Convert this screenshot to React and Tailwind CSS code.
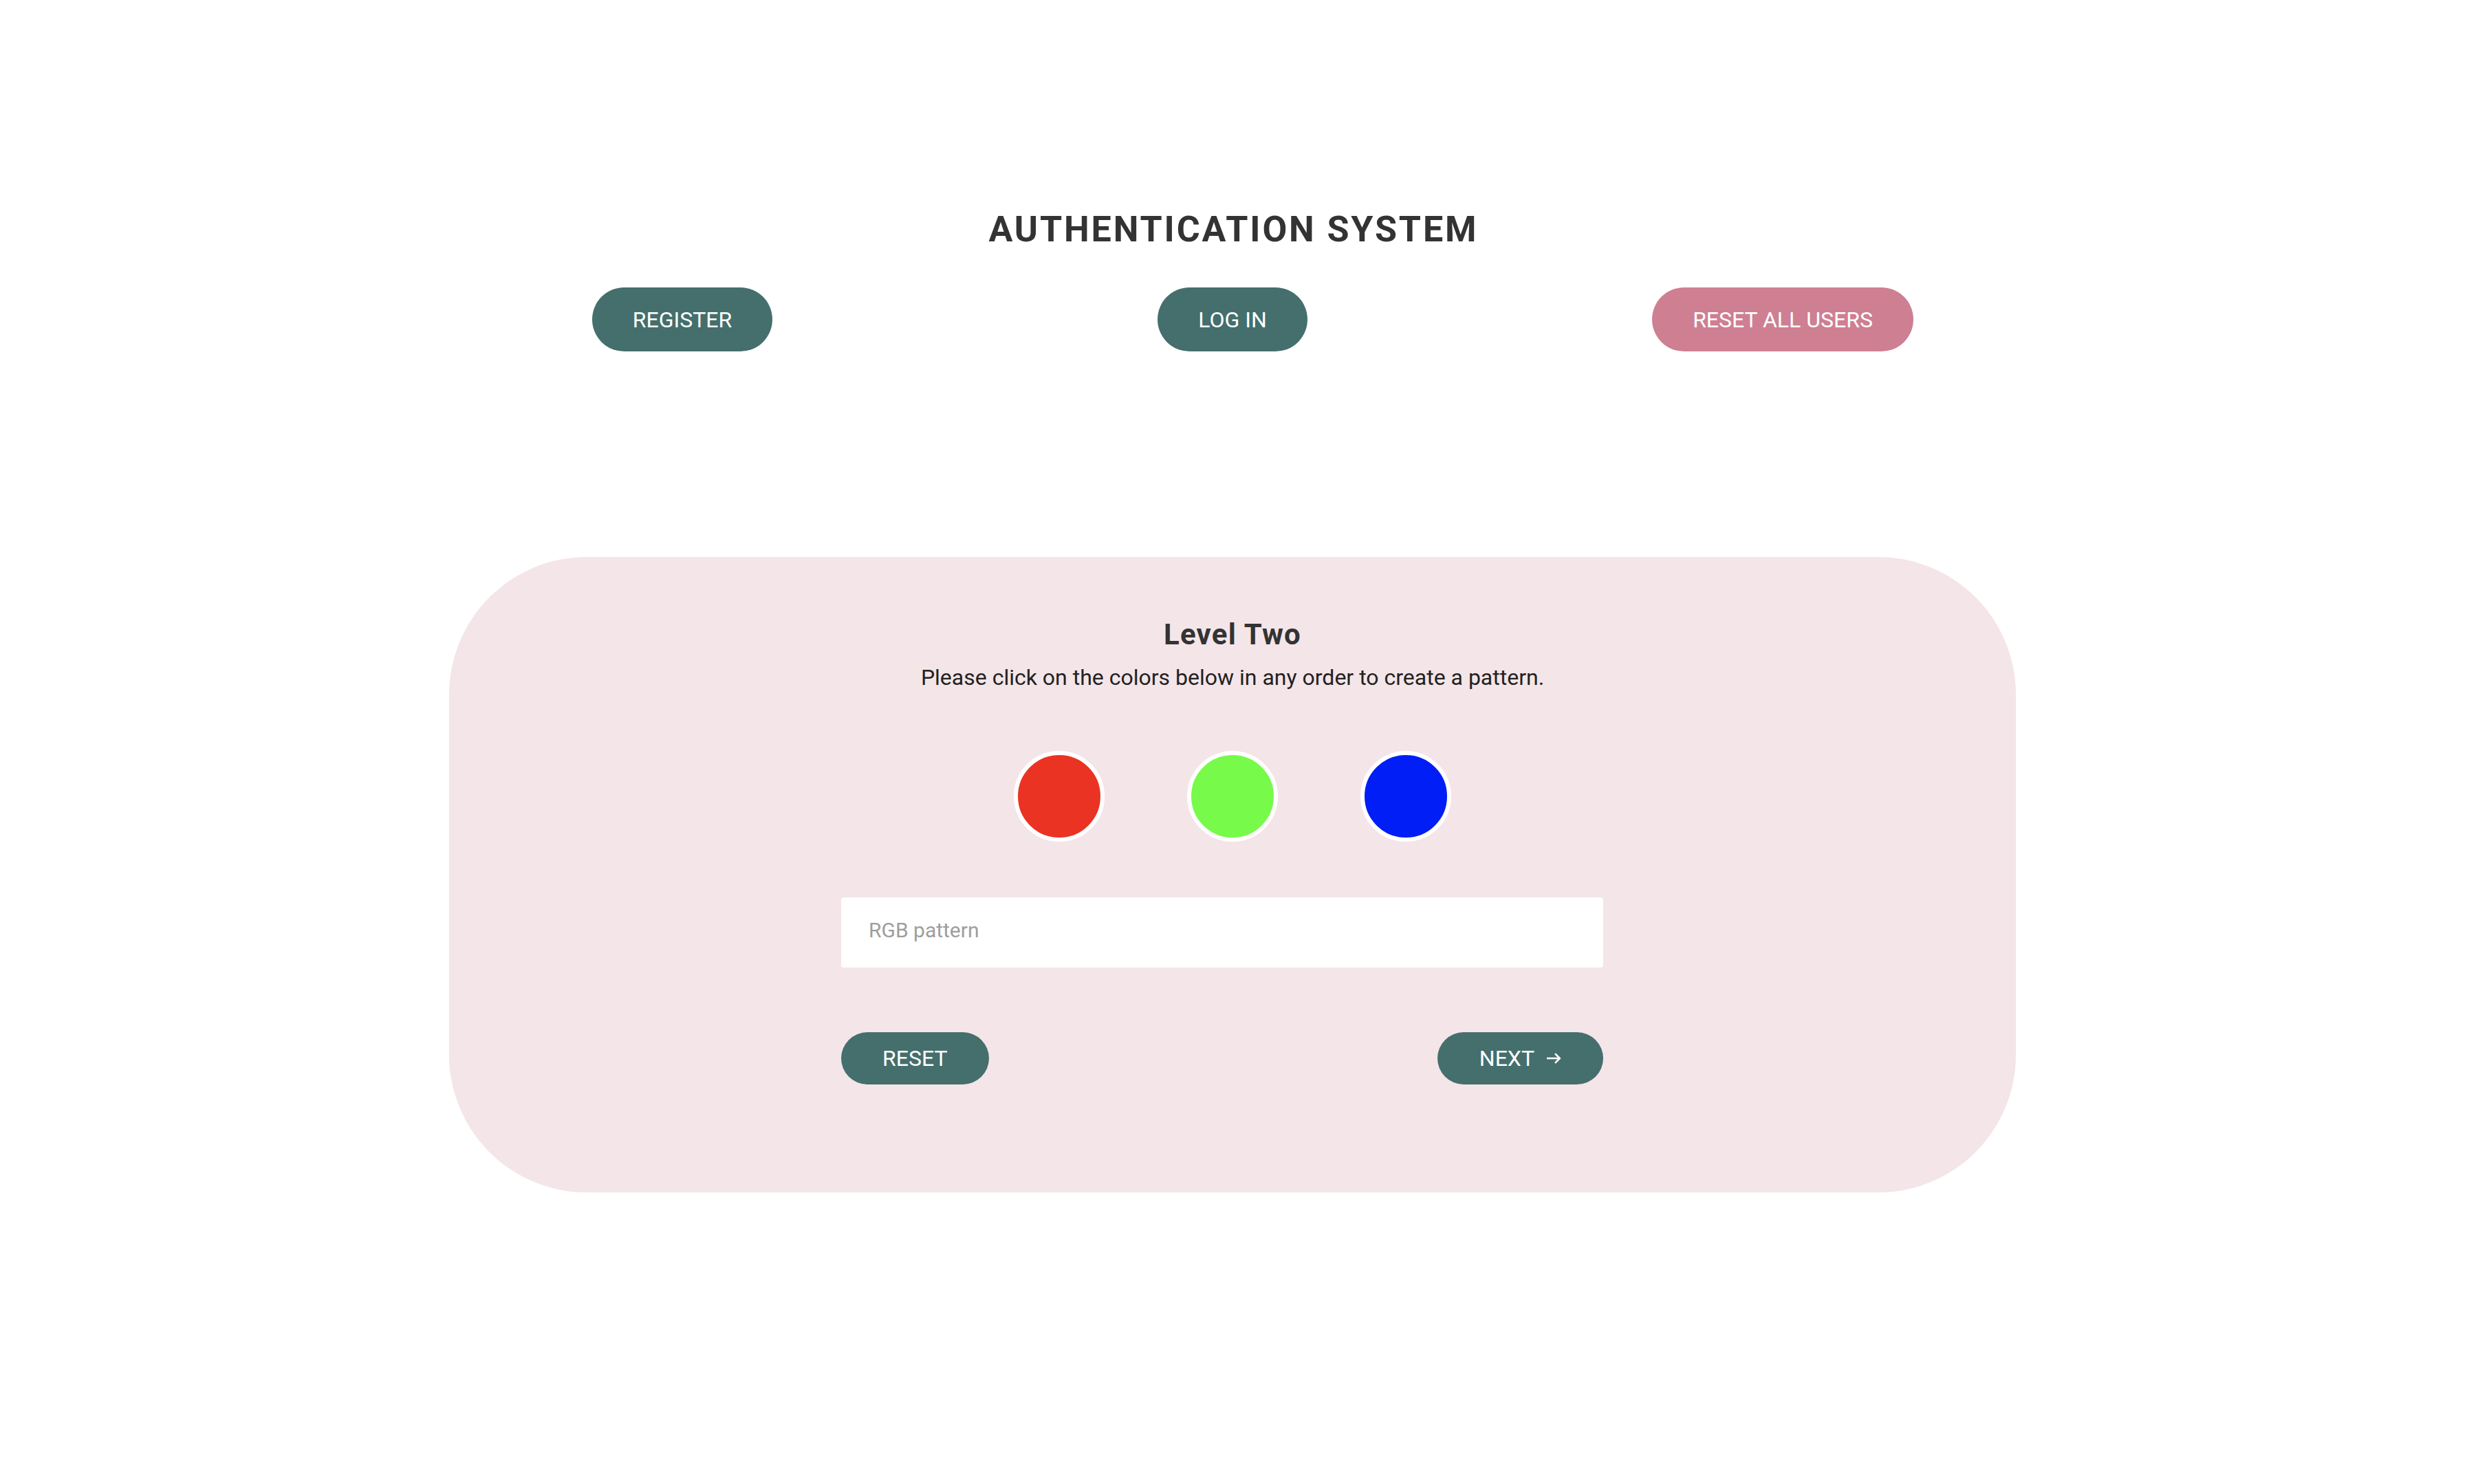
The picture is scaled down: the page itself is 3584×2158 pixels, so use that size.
import { useState } from 'react';

const navButtons = [
  { label: 'REGISTER', color: 'bg-[#446f6d]' },
  { label: 'LOG IN', color: 'bg-[#446f6d]' },
  { label: 'RESET ALL USERS', color: 'bg-[#ce7f92]' },
];

const swatches = [
  { key: 'R', className: 'bg-[#ea3323]' },
  { key: 'G', className: 'bg-[#78fa4b]' },
  { key: 'B', className: 'bg-[#001ef5]' },
];

function ArrowRight() {
  return (
    <svg width="22" height="16" viewBox="0 0 22 16" fill="none" stroke="currentColor" strokeWidth="2.6">
      <path d="M1 8h19" />
      <path d="M13 1.2 19.8 8 13 14.8" />
    </svg>
  );
}

export default function App() {
  const [pattern, setPattern] = useState('');

  return (
    <div className="min-h-screen bg-white font-['Roboto','Liberation_Sans',sans-serif] text-[#333333]">
      <header className="flex flex-col items-center pt-[308px]">
        <h1 className="pl-[0.055em] text-[52px] font-bold leading-[52px] tracking-[0.055em]">
          AUTHENTICATION SYSTEM
        </h1>
        <nav className="mt-[58px] grid w-[2400px] grid-cols-3 justify-items-center">
          {navButtons.map((btn) => (
            <button
              key={btn.label}
              type="button"
              className={`h-[93px] rounded-full px-[59px] text-[32px] text-white ${btn.color}`}
            >
              {btn.label}
            </button>
          ))}
        </nav>
      </header>

      <main className="mx-auto mt-[299px] flex w-[2278px] flex-col items-center rounded-[200px] bg-[#f4e5e8] pt-[92px] pb-[157px]">
        <h2 className="text-[42px] font-bold leading-[42px] tracking-[0.03em]">Level Two</h2>
        <p className="mt-[25px] text-[32px] leading-[32px] text-[#222222]">
          Please click on the colors below in any order to create a pattern.
        </p>

        <div className="mt-[91px] flex gap-[120px]">
          {swatches.map((s) => (
            <button
              key={s.key}
              type="button"
              aria-label={s.key}
              onClick={() => setPattern((p) => p + s.key)}
              className={`h-[132px] w-[132px] rounded-full border-[6px] border-white ${s.className}`}
            />
          ))}
        </div>

        <div className="mt-[81px] mr-[30px] flex w-[1108px] flex-col">
          <input
            value={pattern}
            readOnly
            placeholder="RGB pattern"
            className="h-[102px] w-full rounded-[4px] bg-white px-[40px] pb-[8px] text-[30px] text-[#333333] outline-none placeholder:text-[#9e9e9e]"
          />
          <div className="mt-[94px] flex justify-between">
            <button
              type="button"
              onClick={() => setPattern('')}
              className="h-[76px] rounded-full bg-[#446f6d] px-[60px] text-[32px] text-white"
            >
              RESET
            </button>
            <button
              type="button"
              className="flex h-[76px] items-center gap-[17px] rounded-full bg-[#446f6d] px-[61px] text-[32px] text-white"
            >
              NEXT
              <ArrowRight />
            </button>
          </div>
        </div>
      </main>
    </div>
  );
}
